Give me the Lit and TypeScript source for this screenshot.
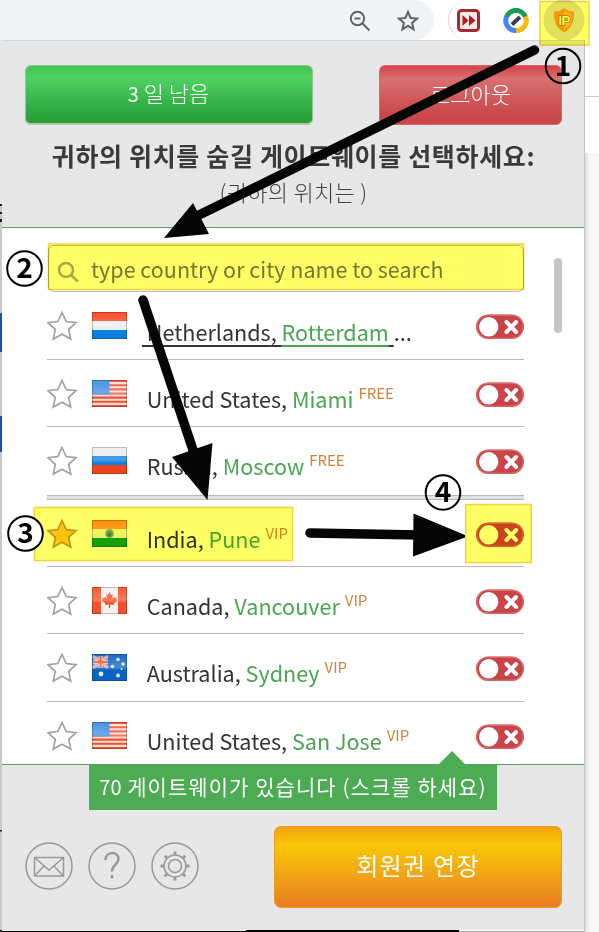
import { LitElement, html, svg, css } from "lit";
import { customElement } from "lit/decorators.js";
import { classMap } from "lit/directives/class-map.js";

const FLAGS: Record<string, unknown> = {
  nl: svg`<path fill="#fff" d="M0 0h35v27H0z"/><path fill="#f4431c" d="M0 0h35v9H0z"/><path fill="#eee" d="M0 9h35v9H0z"/><path fill="#0b7fe0" d="M0 18h35v9H0z"/>`,
  us: svg`<path fill="#fbdcd0" d="M0 0h35v27H0z"/><path stroke="#ea5338" stroke-width="2.1" d="M0 1h35M0 5.2h35M0 9.4h35M0 13.5h35M0 17.6h35M0 21.8h35M0 26h35"/><path fill="#3a8be0" d="M0 0h17.5v14.5H0z"/><path stroke="#5c9fea" stroke-width="1" stroke-dasharray="1 1.8" d="M2 3h14M3 5.5h13M2 8h14M3 10.5h13"/>`,
  ru: svg`<path fill="#ececec" d="M0 0h35v9H0z"/><path fill="#0b7fe0" d="M0 9h35v9H0z"/><path fill="#f4431c" d="M0 18h35v9H0z"/>`,
  in: svg`<path fill="#ff8a12" d="M0 0h35v9H0z"/><path fill="#eee" d="M0 9h35v9H0z"/><path fill="#12a010" d="M0 18h35v9H0z"/><circle cx="17.5" cy="13.5" r="4.4" fill="#5ca0a8"/><circle cx="17.5" cy="13.5" r="2.4" fill="#1f70a0"/>`,
  ca: svg`<path fill="#f4f0ee" d="M0 0h35v27H0z"/><path fill="#f4502c" d="M0 0h9v27H0zM26 0h9v27h-9zM17.500 5l1.600 3 1.800-.8-.7 4.200 2-1.600.5 1.200 2.300-.2-.7 2.200 1.200.6-3.700 3 .3 1.500-3.900-.5v3.400h-1.400v-3.400l-3.900.5.3-1.500-3.700-3 1.200-.6-.7-2.200 2.300.2.500-1.200 2 1.600-.7-4.200 1.800.8z"/>`,
  au: svg`<path fill="#0b62c4" d="M0 0h35v27H0z"/><path fill="#4f86cc" d="M1 2h15v12H1z"/><path stroke="#f2cfc8" stroke-width="2.600" d="M1 2l15 12M16 2L1 14"/><path stroke="#f6d8d0" stroke-width="3.600" d="M8.500 2v12M1 8h15"/><path stroke="#f0512f" stroke-width="2.200" d="M8.500 2v12M1 8h15"/><path stroke="#f0512f" stroke-width=".8" d="M1 2l15 12M16 2L1 14"/><g fill="#dff0ff"><circle cx="9" cy="20" r="2.400"/><circle cx="26" cy="5.500" r="1.800"/><circle cx="20.500" cy="12.500" r="1.800"/><circle cx="31" cy="10" r="1.800"/><circle cx="29.500" cy="15" r="1"/><circle cx="26" cy="21.500" r="1.900"/></g>`,
};

interface Gateway { flag: string; country: string; city: string; tier?: string; hover?: boolean; fav?: boolean; size: string }

const GATEWAYS: Gateway[] = [
  { flag: "nl", country: "Netherlands", city: "Rotterdam", hover: true, size: "tall" },
  { flag: "us", country: "United States", city: "Miami", tier: "FREE", size: "" },
  { flag: "ru", country: "Russia", city: "Moscow", tier: "FREE", size: "band" },
  { flag: "in", country: "India", city: "Pune", tier: "VIP", fav: true, size: "" },
  { flag: "ca", country: "Canada", city: "Vancouver", tier: "VIP", size: "" },
  { flag: "au", country: "Australia", city: "Sydney", tier: "VIP", size: "tall" },
  { flag: "us", country: "United States", city: "San Jose", tier: "VIP", size: "last" },
];

@customElement("gateway-row")
class GatewayRow extends LitElement {
  static properties = { gateway: { attribute: false } };
  declare gateway: Gateway;
  static styles = css`
    :host { display: block; }
    .row { display: grid; grid-template-columns: 45px 55px 1fr 48px; height: 68px; align-items: start; }
    svg { display: block; }
    .star { margin-top: 18px; }
    .flag { margin-top: 20px; }
    .toggle { margin-top: 22px; }
    .fav { margin-top: -.5px; }
    .name { margin: 23.400px 0 0 -.3px; line-height: 32px; font-size: 21.6px; color: #333; white-space: nowrap; }
    .name.hover { margin-left: -5px; margin-top: 24px; }
    .u { text-decoration: underline; text-underline-offset: 4px; text-decoration-thickness: 2px; white-space: pre; }
    .city { color: #4aa556; }
    .tier { color: #d88236; font-size: 15px; position: relative; top: -9px; margin-left: 5px; line-height: 1; }
  `;
  render() {
    const g = this.gateway;
    return html`<div class=${classMap({ row: true, fav: !!g.fav })}>
      <svg class="star" width="31" height="31" viewBox="0 0 31 31"><path d="M15 2.500l4.200 9 9.800 1.200-7.300 6.600 2 9.700-8.700-4.800L6.300 29l2-9.700L1 12.700l9.800-1.200z" fill=${g.fav ? "#ffc220" : "#fff"} stroke=${g.fav ? "#bf9440" : "#a0a0a8"} stroke-width="1.700"/></svg>
      <svg class="flag" width="35" height="27" viewBox="0 0 35 27"><defs><linearGradient id="s" x2="0" y2="1"><stop stop-color="#fff" stop-opacity=".05"/><stop offset=".48" stop-color="#fff" stop-opacity=".25"/><stop offset=".6" stop-color="#fff" stop-opacity="0"/></linearGradient></defs>${FLAGS[g.flag]}<path fill="url(#s)" d="M0 0h35v27H0z"/><path fill="none" stroke="#000" stroke-opacity=".22" d="M.5.5h34v26H.5z"/></svg>
      <div class=${classMap({ name: true, hover: !!g.hover })}>${g.hover
        ? html`<span class="u"> ${g.country}, <span class="u city">${g.city}</span> </span>...`
        : html`${g.country}, <span class="city">${g.city}</span><span class="tier">${g.tier}</span>`}</div>
      <svg class="toggle" width="48" height="26" viewBox="0 0 48 26"><rect y=".5" width="48" height="24.500" rx="12.200" fill="#c94348"/><rect x=".7" y="1.200" width="46.600" height="23" rx="11.500" fill="none" stroke="#df8583" stroke-width=".8"/><circle cx="12.700" cy="12.800" r="9.700" fill="#fff"/><path d="M30.500 8l9.600 10m0-10l-9.600 10" stroke="#fff" stroke-width="4" stroke-linecap="round"/></svg>
    </div>`;
  }
}

@customElement("app-root")
class AppRoot extends LitElement {
  static styles = css`
    :host { display: block; width: 599px; height: 932px; position: relative; overflow: hidden; background: #fff; font-family: "Noto Sans CJK KR", "Noto Sans", sans-serif; }
    * { box-sizing: border-box; }
    svg { display: block; }
    .page { height: 932px; display: flex; flex-direction: column; }
    .bar { height: 40px; flex: none; display: flex; background: #fff; }
    .omni { width: 434px; background: #f1f3f4; border-radius: 0 20px 20px 0; display: flex; justify-content: flex-end; align-items: center; gap: 26px; padding: 2px 15px 0 0; }
    .ext { margin-left: 14px; width: 151px; border-left: 1px solid #f3cdd4; border-radius: 20px 0 0 20px; display: flex; align-items: center; padding: 2px 0 0 8px; }
    .ext .b { margin-left: 22px; }
    .ext .c { margin-left: 14px; }
    .body { display: grid; grid-template-columns: 2px 582px 15px; height: 892px; }
    .left, .right { display: block; }
    .right { background: #f8f8f8; border-left: 1px solid #c4c4c4; box-shadow: inset 4px 0 4px -3px #ccc; }
    .right .top { height: 113px; background: linear-gradient(#fff 56px, #ccc 56px, #ccc 57px, #fff 57px); }
    .panel { background: #e7e7e7; display: flex; flex-direction: column; height: 890px; border-top: 1px solid #d2d4d6; }
    .head { height: 187px; flex: none; border-bottom: 1px solid #5a9f68; padding: 24px 22px 0 23px; }
    .buttons { display: flex; justify-content: space-between; }
    .btn { height: 60px; border-radius: 6px; display: flex; align-items: center; justify-content: center; color: #fff; font-size: 22px; font-weight: 300; padding-bottom: 5px; white-space: pre; }
    .days { width: 288px; padding-right: 1px; background: linear-gradient(#3fc552, #4fd264 20%, #27a036 92%, #279f30); border: 1px solid #92c58e; border-bottom: 2px solid #b3c8ac; }
    .days small { font-size: 20px; font-weight: 400; align-self: center; margin-top: 3px; }
    .out { width: 183px; background: linear-gradient(#d54448, #d97070 22%, #c9474a 85%, #c9474a); border: 1px solid #d66; }
    h1 { margin: 12px 0 0; font-size: 25px; line-height: 36px; font-weight: 700; color: #3a3a3a; text-align: center; white-space: nowrap; letter-spacing: .65px; }
    .loc { margin-top: 1px; text-align: center; font-size: 22px; line-height: 34px; font-weight: 300; color: #444; white-space: nowrap; letter-spacing: .3px; }
    .list { height: 536px; flex: none; background: #fff; overflow: hidden; display: flex; padding: 17px 22px 0 45px; }
    .rows { width: 477px; }
    .search { height: 47px; margin-left: 1px; border: 1px solid #bbb; border-radius: 6px; display: flex; align-items: center; color: #777; font-size: 21.5px; padding-left: 8px; gap: 12px; white-space: nowrap; }
    .search svg { margin-top: 7px; }
    .thumb { width: 8px; height: 75px; margin: 13px 0 0 auto; border-radius: 4px; background: #c5c5c5; }
    gateway-row { height: 67px; overflow: hidden; border-bottom: 1px solid #b9b9bb; box-sizing: border-box; }
    gateway-row.tall { height: 68px; }
    gateway-row.band { height: 68px; border-bottom: 0; }
    .band-line { height: 5px; background: #e0e1e3; border: solid #b9b9bb; border-width: 1px 0; }
    .foot { flex: 1; border-top: 1px solid #5a9f68; }
    .count { position: relative; margin-left: 87px; width: 408px; height: 45px; background: #4cab53; color: #fff; font-size: 21px; line-height: 42px; text-align: center; white-space: nowrap; letter-spacing: 1.05px; }
    .count small { font-size: 20px; letter-spacing: 0; }
    .count::before { content: ""; position: absolute; top: -14px; left: 349px; border: 14px solid transparent; border-top: 0; border-bottom-color: #4cab53; }
    .acts { display: flex; align-items: center; gap: 15px; padding: 16px 22px 0 23px; }
    .acts svg { margin-bottom: 2px; }
    .renew { margin-left: auto; width: 288px; height: 82px; border-radius: 7px; background: linear-gradient(#f3a20b, #f9c806 22%, #f5b010 48%, #ea7d24); border: 1px solid #ee9a20; font-size: 24px; font-weight: 400; padding-bottom: 5px; letter-spacing: 1.3px; }
    .marks, .notes { position: absolute; inset: 0; }
    .marks { mix-blend-mode: multiply; }
    .num { font: 700 28px "Noto Sans CJK KR", sans-serif; text-anchor: middle; fill: #000; }
  `;
  render() {
    const nums: [number, number, number][] = [[1, 563, 66], [2, 24.5, 268.500], [3, 25.500, 533.500], [4, 443, 492.500]];
    return html`
    <div class="page">
      <div class="bar">
        <div class="omni">
          <svg width="22" height="22" viewBox="0 0 22 22" fill="none" stroke="#606367" stroke-width="2"><circle cx="8.500" cy="8.500" r="6.700"/><path d="M5.500 8.500h6M13.500 13.500l7 7"/></svg>
          <svg width="22" height="22" viewBox="0 0 22 22" fill="none" stroke="#606367" stroke-width="2"><path d="M11 2l2.600 6 6.400.6-4.900 4.300 1.500 6.400-5.600-3.500-5.600 3.500 1.500-6.400L2 8.600 8.400 8z"/></svg>
        </div>
        <div class="ext">
          <svg width="24" height="24" viewBox="0 0 24 24"><rect x="1.500" y="1.500" width="20" height="20" rx="3" fill="#f3eae8" stroke="#a52a30" stroke-width="3"/><path fill="#b01c20" d="M5.500 6l6 5.500-6 5.500zM12 6l6.500 5.500L12 17z"/></svg>
          <svg class="b" width="26" height="26" viewBox="0 0 26 26" fill="none" stroke-width="5"><path stroke="#1b9a58" d="M3.600 9a10 10 0 0 1 18.800 0"/><path stroke="#fbb70f" d="M22.400 8.500A10 10 0 0 1 13 22.500"/><path stroke="#4285f4" d="M13 22.500A10 10 0 0 1 3.600 8.500"/><path stroke="#3c3a4c" stroke-width="3.800" d="M9 16.500l8-7.500"/></svg>
          <svg class="c" width="42" height="42" viewBox="0 0 42 42"><circle cx="21" cy="20" r="20.500" fill="#e0e0de"/><path fill="#f49a1c" d="M21 8q5 4 10 3.500 1 15-10 21-11-6-10-21 5 .5 10-3.500z"/><path fill="#fdb62c" d="M21 10.500q4 3 8 3 .5 12-8 16.500z"/><text x="21.500" y="25" text-anchor="middle" font-family="Liberation Sans" font-weight="700" font-size="13.500" textLength="12" fill="#fffbd0" stroke="#c07010" stroke-width="1.500" paint-order="stroke">IP</text></svg>
        </div>
      </div>
      <div class="body">
        <svg class="left" width="2" height="892" viewBox="0 0 2 892" preserveAspectRatio="none"><path fill="#e6e7e9" d="M0 0h2v165H0z"/><path fill="#c8c8cc" d="M0 165h2v725H0z"/><path fill="#222" d="M0 164h2v2H0zM0 172h2v2H0zM0 179h2v3H0zM0 790h2v1.500H0zM0 890h2v2H0z"/><path fill="#1c4faa" d="M0 273h2v39H0zM0 376h2v36H0z"/></svg>
        <div>
          <div class="panel">
            <div class="head">
              <div class="buttons"><div class="btn days"><small>3</small> 일 남음</div><div class="btn out">로그아웃</div></div>
              <h1>귀하의 위치를 숨길 게이트웨이를 선택하세요:</h1>
              <div class="loc">(귀하의 위치는 )</div>
            </div>
            <div class="list">
              <div class="rows">
                <div class="search"><svg width="22" height="22" viewBox="0 0 22 22" fill="none" stroke="#aaa" stroke-width="2.600"><circle cx="9" cy="9" r="7"/><path d="M14 14l7 6.500"/></svg>type country or city name to search</div>
                ${GATEWAYS.map(g => html`<gateway-row class=${g.size} .gateway=${g}></gateway-row>${g.size === "band" ? html`<div class="band-line"></div>` : ""}`)}
              </div>
              <div class="thumb"></div>
            </div>
            <div class="foot">
              <div class="count"><small>70</small> 게이트웨이가 있습니다 (스크롤 하세요)</div>
              <div class="acts">
                <svg width="48" height="48" viewBox="0 0 48 48" fill="none" stroke="#999" stroke-width="1.500"><circle cx="24" cy="24" r="23"/><path d="M9.500 15.500h29v18.500h-29zM10 16l14 12 14-12M10 33.500l9-9.500M38 33.500L29 24"/></svg>
                <svg width="48" height="48" viewBox="0 0 48 48" fill="none" stroke="#999" stroke-width="1.500"><circle cx="24" cy="24" r="23"/><path stroke-width="2.500" d="M17.500 18c0-9 13-9 13-1 0 6-6.500 5.500-6.500 12.500M24 33v3.500"/></svg>
                <svg width="48" height="48" viewBox="0 0 48 48" fill="none" stroke="#999" stroke-width="1.500"><circle cx="24" cy="24" r="23"/><circle cx="24" cy="24" r="6.500"/><circle cx="24" cy="24" r="11"/>${[0, 45, 90, 135, 180, 225, 270, 315].map(a => svg`<path transform="rotate(${a} 24 24)" stroke-width="2.800" d="M24 9.500v3.500"/>`)}</svg>
                <div class="btn renew">회원권 연장</div>
              </div>
            </div>
          </div>
          <svg width="582" height="2"><path fill="#f5f5f5" d="M0 0h244v1H0z"/><path fill="#000" d="M0 1h244v1H0zM244 0h213v2H244z"/><path fill="#aaa" d="M457 1h126v1H457z"/></svg>
        </div>
        <div class="right"><div class="top"></div></div>
      </div>
    </div>
    <svg class="marks" width="599" height="932" viewBox="0 0 599 932">
      <g fill="#ffff66" stroke="#f2d43c" stroke-width="1.500"><rect x="540" y="1.500" width="49" height="43.500"/><rect x="48.500" y="244" width="475" height="45.500"/><rect x="34.500" y="507.500" width="258" height="53"/><rect x="465.700" y="504.500" width="65.500" height="58"/></g>
    </svg>
    <svg class="notes" width="599" height="932" viewBox="0 0 599 932">
      <g stroke="#050505" stroke-width="9.500" stroke-linecap="round"><path d="M534.500 50L195 217M143 300l50 150"/><path d="M310 533l110 2"/></g>
      <path d="M164 238l29-35 16 31zM172 457l40.500-14-5 57zM413.500 513.500L465 535v2.500l-52 19z" fill="#050505"/>
      ${nums.map(([n, x, y]) => svg`<circle cx=${x} cy=${y} r="17.300" fill=${n === 3 ? "#fff" : "none"} stroke="#000" stroke-width="2"/><text class="num" x=${x} y=${y + 9.5}>${n}</text>`)}
    </svg>`;
  }
}
